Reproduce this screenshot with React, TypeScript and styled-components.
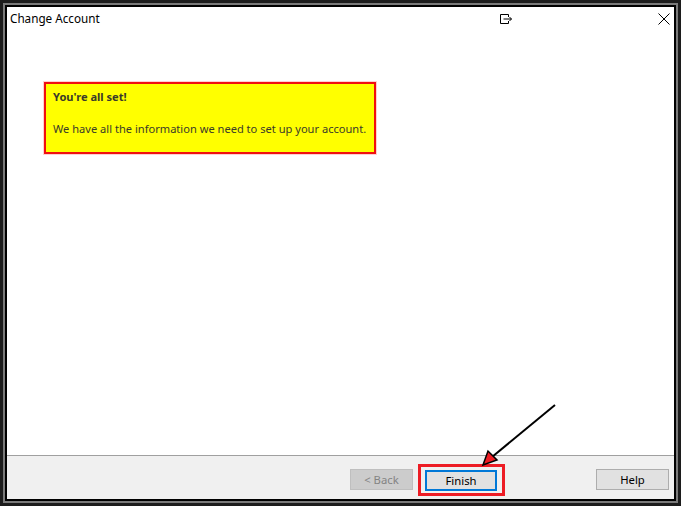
import React from "react";
import styled, { createGlobalStyle } from "styled-components";

const Global = createGlobalStyle`
  html, body { margin: 0; padding: 0; background: #1a1a1a; }
  * { box-sizing: border-box; }
`;

const Outer = styled.div`
  position: relative;
  width: 681px;
  height: 506px;
  border: 3px solid #1c1c1c;
  background: #1c1c1c;
  font-family: "Segoe UI", "Noto Sans", sans-serif;
`;

const Mid = styled.div`
  width: 100%;
  height: 100%;
  border: 2px solid #7a7a7a;
`;

const Inner = styled.div`
  width: 100%;
  height: 100%;
  border: 2px solid #000;
  background: #fff;
  display: flex;
  flex-direction: column;
`;

const TitleBar = styled.div`
  height: 24px;
  display: flex;
  align-items: center;
  padding-left: 3px;
  background: #fff;
`;

const Title = styled.div`
  flex: 1;
  font-size: 11.7px;
  color: #000;
  line-height: 1;
  padding-bottom: 1px;
`;

const TitleButton = styled.div<{ $w: number; $end?: boolean }>`
  width: ${(p) => p.$w}px;
  height: 24px;
  display: flex;
  align-items: center;
  justify-content: ${(p) => (p.$end ? "flex-end" : "center")};
  padding-right: ${(p) => (p.$end ? 4 : 0)}px;
`;

const Body = styled.div`
  flex: 1;
  padding: 51px 0 0 37px;
`;

const Notice = styled.div`
  width: 332px;
  height: 72px;
  background: #ffff00;
  border: 2px solid #f01010;
  box-shadow: 0 0 0 1px rgba(255, 120, 120, 0.35);
  padding: 5px 0 0 7px;
  font-size: 11.1px;
  color: #3a3a2a;
`;

const NoticeTitle = styled.div`
  font-weight: 700;
  line-height: 16px;
`;

const NoticeText = styled.div`
  margin-top: 16px;
  line-height: 16px;
`;

const Footer = styled.div`
  height: 44px;
  border-top: 1px solid #a0a0a0;
  background: #f0f0f0;
  display: flex;
  align-items: flex-start;
  justify-content: flex-end;
  padding: 8px 5px 0 0;
`;

const Button = styled.div<{ $disabled?: boolean; $w: number }>`
  width: ${(p) => p.$w}px;
  height: 21px;
  margin-top: 5px;
  border: 1px solid ${(p) => (p.$disabled ? "#bfbfbf" : "#adadad")};
  background: ${(p) => (p.$disabled ? "#cccccc" : "#e1e1e1")};
  color: ${(p) => (p.$disabled ? "#838383" : "#000")};
  font-size: 11.3px;
  display: flex;
  align-items: center;
  justify-content: center;
`;

const Highlight = styled.div`
  width: 87px;
  height: 32px;
  margin-left: 5px;
  margin-right: 91px;
  border: 3px solid #ed1c24;
  padding: 3px 5px 0 4px;
`;

const DefaultButton = styled(Button)`
  margin-top: 0;
  width: 72px;
  border: 2px solid #0078d7;
`;

const ArrowOverlay = styled.svg`
  position: absolute;
  left: -3px;
  top: -3px;
  pointer-events: none;
`;

export default function App() {
  return (
    <>
      <Global />
      <Outer>
        <Mid>
          <Inner>
            <TitleBar>
              <Title>Change Account</Title>
              <TitleButton $w={36}>
                <svg width="13" height="10" viewBox="0 0 13 10">
                  <path
                    d="M8.5 3 V0.5 H0.5 V9.5 H8.5 V7 M3.5 5 H11.5 M9.5 3 L11.5 5 L9.5 7"
                    fill="none"
                    stroke="#000"
                    strokeWidth="1"
                  />
                </svg>
              </TitleButton>
              <TitleButton $w={150} $end>
                <svg width="12" height="12" viewBox="0 0 12 12">
                  <path d="M0.5 0.5 L11.5 11.5 M11.5 0.5 L0.5 11.5" stroke="#000" strokeWidth="1" />
                </svg>
              </TitleButton>
            </TitleBar>
            <Body>
              <Notice>
                <NoticeTitle>You're all set!</NoticeTitle>
                <NoticeText>We have all the information we need to set up your account.</NoticeText>
              </Notice>
            </Body>
            <Footer>
              <Button $disabled $w={63}>&lt; Back</Button>
              <Highlight>
                <DefaultButton $w={72}>Finish</DefaultButton>
              </Highlight>
              <Button $w={73}>Help</Button>
            </Footer>
          </Inner>
        </Mid>
        <ArrowOverlay width="681" height="506" viewBox="0 0 681 506">
          <line x1="555" y1="405" x2="492" y2="457" stroke="#000" strokeWidth="2" />
          <polygon points="483,465 488,451 497,460" fill="#ed1c24" stroke="#000" strokeWidth="1.5" strokeLinejoin="miter" />
        </ArrowOverlay>
      </Outer>
    </>
  );
}
